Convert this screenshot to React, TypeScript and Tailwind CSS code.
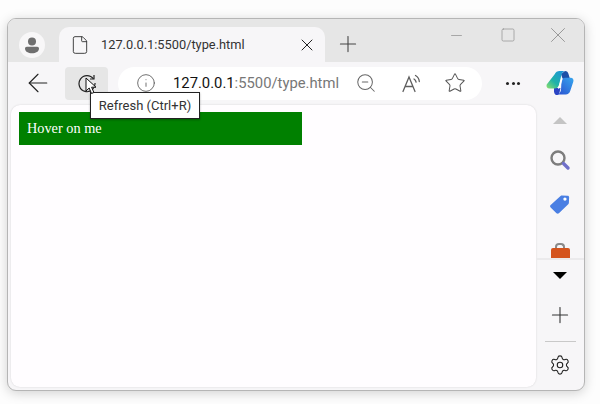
import { ArrowLeft, File, Info, Minus, Plus, Settings, Square, Star, X, ZoomOut } from "lucide-react";

function Avatar() {
  return (
    <div className="flex size-[26px] items-center justify-center rounded-full bg-[#f8f7f8]">
      <svg width="16" height="17" viewBox="0 0 16 17" fill="#6f6f6f">
        <circle cx="8" cy="4.5" r="4" />
        <path d="M1 11.5c0-1 .8-1.7 1.8-1.7h10.4c1 0 1.8.7 1.8 1.7 0 3.2-3.2 4.8-7 4.8s-7-1.6-7-4.8z" />
      </svg>
    </div>
  );
}

function ReadAloud() {
  return (
    <svg width="24" height="24" viewBox="0 0 24 24" fill="none" stroke="#5f5f5f" strokeWidth="1.3" strokeLinecap="round">
      <path d="M4 20.500 10 6l6 14.500M6 15.500h8" />
      <path d="M15 8c1.200.7 1.900 1.800 2.100 3.200M16.500 4.500c2.300 1.300 3.600 3.500 3.800 6" />
    </svg>
  );
}

function Copilot() {
  return (
    <svg width="28" height="26" viewBox="0 0 28 26">
      <defs>
        <linearGradient id="cpLeft" x1="0" y1="1" x2="1" y2="0">
          <stop offset="0" stopColor="#8ee06a" />
          <stop offset="0.4" stopColor="#1fb3a8" />
          <stop offset="1" stopColor="#1d8fe0" />
        </linearGradient>
        <linearGradient id="cpRight" x1="0" y1="1" x2="1" y2="0">
          <stop offset="0" stopColor="#2a4fd0" />
          <stop offset="1" stopColor="#37a6ee" />
        </linearGradient>
      </defs>
      <path d="M19 1c2 0 3 1 3.500 3l1.500 5-7 1-2-6z" fill="#1c4fa8" />
      <path d="M8 18h6.500l-1 4.500c-.3 1-1 2.500-2 2.500h-1C9 25 8.300 23.500 8 21.500z" fill="#2b44c4" />
      <path d="M15.500 10.500c.6-1.800 1.800-2.800 3.800-2.800h5.200c2.500 0 3.500 2 2.800 4l-3 9c-.8 2.500-2.500 3.800-4.500 3.800H11c2.500-.5 3.300-2 4-4.500z" fill="url(#cpRight)" />
      <path d="M8.500 4.500C9.500 2 11.500 1 13.500 1H19c-2 .5-3 2-3.700 4.500L13 15c-.8 2.500-2.200 3.500-4.500 3.500H3.500C1 18.500 0 16.500.7 14.500z" fill="url(#cpLeft)" />
      <path d="M15.800 9 13.800 15.500c-.3 1-.6 1.800-1 2.500" stroke="#fff" strokeWidth="1.500" fill="none" strokeLinecap="round" />
    </svg>
  );
}

function Hand() {
  return (
    <svg width="14" height="19" viewBox="0 0 14 19" fill="#fff" stroke="#111" strokeWidth="1">
      <path d="M1 1v13l3.200-3 2.300 5.500 2.400-1-2.300-5.300H11z" />
    </svg>
  );
}

function Sidebar() {
  return (
    <div className="flex w-[48px] shrink-0 flex-col items-center">
      <div className="flex h-[155px] w-full shrink-0 flex-col items-center overflow-hidden border-b-2 border-[#ebeaec] pt-[12px]">
        <div className="h-0 w-0 shrink-0 border-x-[7px] border-b-[7px] border-x-transparent border-b-[#c4c4c4]" />
        <div className="mt-[25px] shrink-0">
          <svg width="22" height="22" viewBox="0 0 22 22" fill="none">
            <circle cx="9" cy="9" r="6.500" stroke="#7d7d7d" strokeWidth="2.400" />
            <path d="M14.500 14.500l4.500 4.500" stroke="#6f6fc9" strokeWidth="3.400" strokeLinecap="round" />
          </svg>
        </div>
        <div className="mt-[22px] shrink-0">
          <svg width="22" height="22" viewBox="0 0 20 20">
            <path d="M1.500 11 10.500 2.800c.4-.4.8-.5 1.300-.5l5 .1c1 0 1.500.6 1.500 1.500l-.2 5c0 .5-.2 1-.6 1.300L9 18.500c-.7.6-1.500.6-2.200 0l-5.300-5.300c-.7-.7-.7-1.500 0-2.200z" fill="#4a7fe3" />
            <circle cx="14.500" cy="5.500" r="1.500" fill="#fff" />
          </svg>
        </div>
        <div className="mt-[28px] flex shrink-0 flex-col items-center">
          <div className="h-[5px] w-[10px] rounded-t-sm border-2 border-b-0 border-[#8a8a8a]" />
          <div className="h-[20px] w-[19px] rounded-[2px] bg-[#d4541e]" />
        </div>
      </div>
      <div className="mt-[12px] h-0 w-0 border-x-[7px] border-t-[7px] border-x-transparent border-t-black" />
      <Plus className="mt-[23px] size-[26px] text-[#333]" strokeWidth={1} />
      <div className="mt-[13px] h-px w-[31px] bg-[#c9c9c9]" />
      <Settings className="mt-[12px] size-[22px] text-[#222]" strokeWidth={1.2} />
    </div>
  );
}

export default function App() {
  return (
    <div className="h-[404px] w-[600px] overflow-hidden bg-[#fdfdfd] pt-[18px] pl-[7px] font-['Roboto',sans-serif]">
      <div className="relative flex h-[373px] w-[578px] flex-col overflow-hidden rounded-[9px] border border-[#b5b5b5] bg-[#f7f6f8] shadow-[0_2px_12px_rgba(0,0,0,0.18)]">
        {/* title bar */}
        <div className="flex h-[43px] shrink-0 items-end bg-[#e6e6e6]">
          <div className="mb-[4px] ml-[11px] w-[40px]">
            <Avatar />
          </div>
          <div className="flex h-[35px] w-[266px] items-center rounded-t-[10px] bg-[#f7f6f8] pl-[11px]">
            <File className="size-[20px] text-[#333]" strokeWidth={1.1} />
            <span className="ml-[11px] w-[142px] text-[12.800px] whitespace-nowrap text-[#333]">127.0.0.1:5500/type.html</span>
            <X className="ml-[54px] size-[20px] text-[#222]" strokeWidth={1.2} />
          </div>
          <Plus className="mb-[5px] ml-[10px] size-[26px] text-[#444]" strokeWidth={1} />
          <div className="mb-[14px] ml-auto flex items-center pr-[13px] text-[#8c8c8c]">
            <Minus className="size-[17px]" strokeWidth={1} />
            <Square className="ml-[35px] size-[16px]" strokeWidth={1} />
            <X className="ml-[29px] size-[26px]" strokeWidth={0.8} />
          </div>
        </div>
        {/* toolbar */}
        <div className="flex h-[43px] shrink-0 items-center pb-[1px]">
          <ArrowLeft className="ml-[15px] size-[30px] text-[#222]" strokeWidth={0.9} />
          <div className="ml-[12px] flex h-[33px] w-[43px] items-center justify-center rounded-[4px] bg-[#e6e6e6]">
            <svg width="20" height="20" viewBox="0 0 20 20" fill="none" stroke="#222" strokeWidth="1.200">
              <path d="M16.500 6A8 8 0 1 0 18 10" />
              <path d="M13 6h4V2" />
            </svg>
          </div>
          <div className="ml-[10px] flex h-[33px] w-[364px] items-center rounded-full bg-white pl-[18px]">
            <Info className="size-[20px] text-[#555]" strokeWidth={1} />
            <span className="ml-[17px] w-[166px] text-[14.800px] whitespace-nowrap text-[#111]">
              127.0.0.1<span className="text-[#777]">:5500/type.html</span>
            </span>
            <ZoomOut className="ml-[16px] size-[22px] text-[#666]" strokeWidth={1.1} />
            <div className="ml-[22px]">
              <ReadAloud />
            </div>
            <Star className="ml-[21px] size-[22px] text-[#555]" strokeWidth={1.1} />
          </div>
          <div className="ml-[24px] flex gap-[2.500px]">
            <div className="size-[3px] rounded-full bg-[#222]" />
            <div className="size-[3px] rounded-full bg-[#222]" />
            <div className="size-[3px] rounded-full bg-[#222]" />
          </div>
          <div className="ml-[26px]">
            <Copilot />
          </div>
        </div>
        {/* content and sidebar */}
        <div className="flex min-h-0 flex-1 pl-[3px]">
          <div className="mb-[3px] flex-1 rounded-[9px] bg-[#fffdff] pt-[7px] pl-[8px] shadow-[0_0_2px_rgba(0,0,0,0.15)]">
            <div className="flex h-[33px] w-[283px] items-center bg-[#008000] pl-[8px] font-['Liberation_Serif',serif] text-[14.300px] text-white">
              Hover on me
            </div>
          </div>
          <Sidebar />
        </div>
        {/* refresh tooltip and cursor */}
        <div className="absolute top-[73px] left-[82px] flex h-[27px] w-[110px] items-center justify-center border border-[#222] bg-white text-[13px] whitespace-nowrap text-[#333] shadow-[0_1px_2px_rgba(0,0,0,0.3)]">
          Refresh (Ctrl+R)
        </div>
        <div className="absolute top-[58px] left-[77px]">
          <Hand />
        </div>
      </div>
    </div>
  );
}
